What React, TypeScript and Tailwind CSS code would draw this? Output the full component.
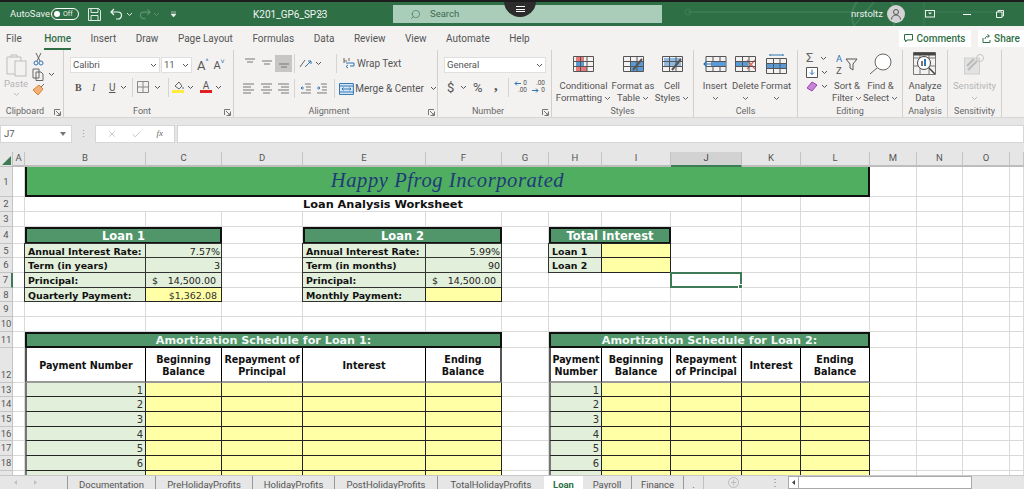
import type { ReactNode } from "react";
import { Check, Search, X } from "lucide-react";

// Excel window: title bar, ribbon, formula bar, sheet grid, sheet tabs

function Chev({ color = "#555", className = "" }: { color?: string; className?: string }) {
  return (
    <svg width="7" height="5" viewBox="0 0 7 5" className={`shrink-0 ${className}`}>
      <path d="M1 1l2.5 2.5L6 1" fill="none" stroke={color} strokeWidth="1" />
    </svg>
  );
}

function Sep({ className = "" }: { className?: string }) {
  return <div className={`w-px h-[19px] bg-[#d4d4d4] shrink-0 ${className}`} />;
}

function Launcher() {
  return (
    <svg width="7" height="7" viewBox="0 0 7 7" className="shrink-0">
      <path d="M.5 6V.5H6M6.5 2.5v4h-4M2 2l4 4M4 6h2V4" fill="none" stroke="#777" strokeWidth="1" />
    </svg>
  );
}

function TitleBar() {
  return (
    <div className="relative h-[26px] border-t-2 border-[#1c1c1c] bg-[#2f6f46] flex items-center text-[9.5px] text-[#e8f1ec] overflow-hidden">
      <svg width="340" height="24" viewBox="0 0 340 24" className="absolute left-[684px] top-0">
        <path d="M4 10H150M190 0l-20 24M150 10h20" fill="none" stroke="#3f7f58" strokeWidth="1.5" />
        <circle cx="4" cy="10" r="3" fill="none" stroke="#3f7f58" />
        <circle cx="190" cy="14" r="22" fill="none" stroke="#3f7f58" strokeWidth="2" />
        <path d="M250 10h70M240 0v24" fill="none" stroke="#3f7f58" />
      </svg>
      <span className="ml-[10px] w-[37px]">AutoSave</span>
      <div className="ml-[4px] w-[28px] h-[12px] rounded-full border border-white flex items-center pl-[2px] gap-[3px]">
        <span className="w-[6px] h-[6px] rounded-full bg-white" />
        <span className="text-[7px] leading-none">Off</span>
      </div>
      <svg width="13" height="13" viewBox="0 0 13 13" className="ml-[9px]">
        <path d="M.5.5h10l2 2v10H.5zM3 .5v4h7v-4M3 12.5V7.5h7v5" fill="none" stroke="#dfe9e3" />
      </svg>
      <svg width="13" height="12" viewBox="0 0 13 12" className="ml-[9px]">
        <path d="M1 4h7a3.5 3.5 0 0 1 0 7H6M4 1L1 4l3 3" fill="none" stroke="#eef4f0" strokeWidth="1.2" />
      </svg>
      <Chev color="#dfe9e3" className="ml-[3px]" />
      <svg width="12" height="12" viewBox="0 0 13 12" className="ml-[6px]">
        <path d="M12 4H5a3.5 3.5 0 0 0 0 7h2M9 1l3 3-3 3" fill="none" stroke="#5f9477" strokeWidth="1.2" />
      </svg>
      <Chev color="#5f9477" className="ml-[2px]" />
      <svg width="7" height="7" viewBox="0 0 7 7" className="ml-[10px]">
        <path d="M1 1h5M1 3l2.5 3L6 3z" fill="#eef4f0" stroke="#eef4f0" strokeWidth=".6" />
      </svg>
      <span className="ml-[76px] w-[60px] text-[10px] whitespace-nowrap text-[#f0f5f2]">K201_GP6_SP23</span>
      <Chev color="#eef4f0" className="ml-[4px]" />
      <div className="ml-[69px] w-[269px] h-[18px] bg-[#a9cdb8] flex items-center pl-[17px] text-[#3f6a52]">
        <Search size={11} className="-scale-x-100" strokeWidth={1.3} />
        <span className="ml-[9px]">Search</span>
      </div>
      <span className="relative ml-[189px] w-[30px] whitespace-nowrap">nrstoltz</span>
      <div className="relative ml-[6px] w-[18px] h-[18px] rounded-full bg-[#d3d3d3] flex items-center justify-center">
        <svg width="12" height="12" viewBox="0 0 12 12">
          <circle cx="6" cy="4" r="2.5" fill="none" stroke="#555" />
          <path d="M1.5 11.5a4.5 4.5 0 0 1 9 0" fill="none" stroke="#555" />
        </svg>
      </div>
      <svg width="10" height="8" viewBox="0 0 10 8" className="relative ml-[20px]">
        <rect x=".5" y=".5" width="9" height="6.5" fill="none" stroke="#eef4f0" />
        <path d="M3 2.5L5 4.5 7 2.5z" fill="#eef4f0" />
      </svg>
      <div className="relative ml-[28px] w-[8px] h-px bg-white" />
      <svg width="8" height="8" viewBox="0 0 8 8" className="relative ml-[25px]">
        <path d="M.5 2h5.5v5.5H.5zM2 2V.5h5.5V6H6" fill="none" stroke="#eef4f0" />
      </svg>
      <div className="absolute left-[504px] -top-[17px] w-[32px] h-[32px] rounded-full bg-[#2c2c2c] flex flex-col items-center justify-end gap-[1.5px] pb-[5px]">
        <span className="w-[9px] h-px bg-white" />
        <span className="w-[9px] h-px bg-white" />
        <span className="w-[9px] h-px bg-white" />
      </div>
    </div>
  );
}

const tabs = ["File", "Home", "Insert", "Draw", "Page Layout", "Formulas", "Data", "Review", "View", "Automate", "Help"];

function TabRow() {
  return (
    <div className="h-[24px] bg-[#f3f2f1] flex items-center pl-[6px] gap-[19.5px] text-[10px] text-[#555]">
      {tabs.map((t) => (
        <span
          key={t}
          className={
            t === "Home"
              ? "relative text-[#2f6f46] font-medium ml-[3px] after:absolute after:left-0 after:right-0 after:-bottom-[4px] after:h-[2px] after:bg-[#2f6f46]"
              : ""
          }
        >
          {t}
        </span>
      ))}
      <div className="ml-auto flex items-center gap-[7px] text-[10px] text-[#2f6f46] font-medium">
        <div className="w-[72px] h-[17px] bg-white flex items-center justify-center gap-[3px]">
          <svg width="9" height="9" viewBox="0 0 9 9">
            <path d="M.5.5h8v5.5H3L1.5 8V6h-1z" fill="none" stroke="#2f6f46" />
          </svg>
          Comments
        </div>
        <div className="w-[46px] h-[17px] bg-white flex items-center justify-center gap-[3px]">
          <svg width="9" height="9" viewBox="0 0 9 9">
            <path d="M1 4v4.5h7V6M3 5c0-2 2-3 4-3M5.5.5L7.5 2 5.5 3.5" fill="none" stroke="#2f6f46" />
          </svg>
          Share
        </div>
      </div>
    </div>
  );
}

function Group({ w, label, launcher, children }: { w: string; label: string; launcher?: boolean; children: ReactNode }) {
  return (
    <div className={`${w} shrink-0 h-[67px] flex flex-col border-r border-[#d2d0ce]`}>
      <div className="flex-1 min-h-0 flex">{children}</div>
      <div className={`h-[10px] flex items-center justify-center relative text-[9px] text-[#666] ${launcher ? "pr-[13px]" : ""}`}>
        {label}
        {launcher && (
          <span className="absolute right-[2px] top-[2px] flex">
            <Launcher />
          </span>
        )}
      </div>
    </div>
  );
}

function Big({ w, icon, lines, chev = true, gray }: { w: string; icon: ReactNode; lines: string[]; chev?: boolean; gray?: boolean }) {
  return (
    <div className={`${w} shrink-0 flex flex-col items-center pt-[1px] text-[9.5px] leading-[12px] ${gray ? "text-[#b5b5b5]" : "text-[#555]"}`}>
      <div className="h-[25px] flex items-center justify-center mb-[4px]">{icon}</div>
      {lines.map((l, i) => (
        <div key={i} className="flex items-center gap-[2px] whitespace-nowrap">
          {l}
          {chev && i === lines.length - 1 && lines.length === 2 && <Chev color={gray ? "#bbb" : "#666"} />}
        </div>
      ))}
      {chev && lines.length === 1 && (
        <div className="h-[12px] flex items-center">
          <Chev color={gray ? "#bbb" : "#666"} />
        </div>
      )}
    </div>
  );
}

function CellGrid({ children, w = 21, h = 16 }: { children?: ReactNode; w?: number; h?: number }) {
  return (
    <svg width={w} height={h} viewBox="0 0 21 16">
      {children}
      <path d="M.5.5h20v15H.5zM.5 5.5h20M.5 10.5h20M7.5.5v15M14 .5v15" fill="none" stroke="#555" />
    </svg>
  );
}

function AlignLines({ kind }: { kind: "top" | "mid" | "bot" | "left" | "center" | "right" }) {
  const rows: Record<string, string> = {
    top: "M2 2h10M4 5h6",
    mid: "M2 4h10M4 7h6",
    bot: "M2 7h10M4 10h6",
    left: "M1 2h11M1 5h8M1 8h11M1 11h8",
    center: "M1 2h11M3 5h7M1 8h11M3 11h7",
    right: "M1 2h11M4 5h8M1 8h11M4 11h8",
  };
  return (
    <svg width="13" height="13" viewBox="0 0 13 13">
      <path d={rows[kind]} fill="none" stroke="#777" />
    </svg>
  );
}

function ClipboardGroup() {
  return (
    <Group w="w-[64px]" label="Clipboard" launcher>
      <div className="w-[32px] flex flex-col items-center text-[9.5px] leading-[12px] text-[#b5b5b5] pt-[4px]">
        <svg width="21" height="23" viewBox="0 0 21 23">
          <path d="M3 3h12v17H1V3zM5 3V1h6v2" fill="none" stroke="#bdbdbd" />
          <rect x="9" y="7" width="11" height="15" fill="#f3f2f1" stroke="#bdbdbd" />
        </svg>
        <span className="mt-[1px]">Paste</span>
        <Chev color="#bbb" className="mt-[2px]" />
      </div>
      <div className="flex flex-col pt-[2px] gap-[2px]">
        <svg width="11" height="14" viewBox="0 0 11 14" className="ml-[1px]">
          <path d="M3 1l4 8M8 1L4 9" stroke="#666" fill="none" />
          <circle cx="3" cy="11" r="2" fill="none" stroke="#2e75b6" />
          <circle cx="8" cy="11" r="2" fill="none" stroke="#2e75b6" />
        </svg>
        <div className="flex items-center gap-[3px]">
          <svg width="13" height="13" viewBox="0 0 13 13">
            <path d="M1 1h6v9H1zM4 4h5l2 2v6.5H4z" fill="#f3f2f1" stroke="#666" />
          </svg>
          <Chev />
        </div>
        <svg width="13" height="13" viewBox="0 0 13 13">
          <path d="M1 7l6-5 4 4-5 6z" fill="#f2b179" stroke="#d68432" />
          <path d="M9 4l3-3" stroke="#666" />
        </svg>
      </div>
    </Group>
  );
}

function FontGroup() {
  return (
    <Group w="w-[170px]" label="Font" launcher>
      <div className="flex flex-col pl-[6px] pt-[7px] w-full">
        <div className="flex items-center h-[16px]">
          <div className="w-[90px] h-[16px] bg-white border border-[#e1dfdd] flex items-center justify-between px-[2px] text-[9.5px] text-[#555]">
            Calibri <Chev />
          </div>
          <div className="w-[31px] h-[16px] ml-[1px] bg-white border border-[#e1dfdd] flex items-center justify-between px-[2px] text-[9.5px] text-[#555]">
            11 <Chev />
          </div>
          <span className="ml-[5px] text-[13px] leading-none text-[#555]">A</span>
          <span className="text-[7px] text-[#2e75b6] -mt-[6px]">^</span>
          <span className="ml-[5px] text-[11px] leading-none text-[#555]">A</span>
          <span className="text-[7px] text-[#2e75b6] -mt-[6px]">˅</span>
        </div>
        <div className="flex items-center h-[16px] mt-[6px] text-[10px] text-[#555]">
          <span className="ml-[5px] w-[17px] font-bold font-['Liberation_Serif',serif]">B</span>
          <span className="w-[17px] italic font-['Liberation_Serif',serif]">I</span>
          <span className="w-[10px] underline">U</span>
          <Chev className="ml-[1px]" />
          <Sep className="ml-[5px]" />
          <svg width="12" height="12" viewBox="0 0 12 12" className="ml-[4px]">
            <path d="M.5.5h11v11H.5zM6 .5v11M.5 6h11" fill="none" stroke="#888" />
          </svg>
          <Chev className="ml-[5px]" />
          <Sep className="ml-[7px]" />
          <div className="ml-[3px] w-[12px] flex flex-col items-center">
            <svg width="11" height="9" viewBox="0 0 11 9">
              <path d="M2 5l4-4 3 4-3 3z" fill="none" stroke="#666" />
              <path d="M10 6v2" stroke="#2e75b6" />
            </svg>
            <div className="w-[12px] h-[3px] bg-[#ffeb3b]" />
          </div>
          <Chev className="ml-[3px]" />
          <div className="ml-[6px] w-[12px] flex flex-col items-center text-[10px] leading-[9px]">
            A
            <div className="w-[12px] h-[3px] bg-[#e02020]" />
          </div>
          <Chev className="ml-[3px]" />
        </div>
      </div>
    </Group>
  );
}

function AlignmentGroup() {
  return (
    <Group w="w-[204px]" label="Alignment" launcher>
      <div className="flex flex-col pl-[6px] pt-[5px] w-full text-[10px] text-[#555] whitespace-nowrap">
        <div className="flex items-center h-[17px]">
          <div className="w-[18px] flex justify-center"><AlignLines kind="top" /></div>
          <div className="w-[17px] flex justify-center"><AlignLines kind="mid" /></div>
          <div className="w-[17px] h-[17px] bg-[#c8c6c4] flex items-center justify-center"><AlignLines kind="bot" /></div>
          <Sep className="ml-[2px]" />
          <svg width="14" height="12" viewBox="0 0 14 12" className="ml-[4px]">
            <path d="M1 9l5-7M6 9l3-3" stroke="#666" fill="none" />
            <path d="M7 8l5-5M9 3h3v3" stroke="#2e75b6" fill="none" />
          </svg>
          <Chev className="ml-[2px]" />
          <Sep className="ml-[14px]" />
          <svg width="13" height="13" viewBox="0 0 13 13" className="ml-[6px]">
            <path d="M7 9h4V6H3M5 11L3 9.5 5 8" fill="none" stroke="#2e75b6" />
            <path d="M1 1v5M1 4h3M6 1v3" fill="none" stroke="#666" />
          </svg>
          <span className="ml-[1px]">Wrap Text</span>
        </div>
        <div className="flex items-center h-[17px] mt-[8px]">
          <div className="w-[18px] flex justify-center"><AlignLines kind="left" /></div>
          <div className="w-[17px] flex justify-center"><AlignLines kind="center" /></div>
          <div className="w-[17px] flex justify-center"><AlignLines kind="right" /></div>
          <Sep className="ml-[2px]" />
          <svg width="12" height="11" viewBox="0 0 12 11" className="ml-[5px]">
            <path d="M5 1h6M6 4h5M6 7h5M1 10h10" stroke="#777" fill="none" />
            <path d="M4 5H1M2.5 3.5L1 5l1.500 1.500" stroke="#2e75b6" fill="none" />
          </svg>
          <svg width="12" height="11" viewBox="0 0 12 11" className="ml-[5px]">
            <path d="M5 1h6M6 4h5M6 7h5M1 10h10" stroke="#777" fill="none" />
            <path d="M1 5h3M2.500 3.500L4 5 2.500 6.500" stroke="#2e75b6" fill="none" />
          </svg>
          <Sep className="ml-[6px]" />
          <svg width="15" height="12" viewBox="0 0 15 12" className="ml-[4px]">
            <path d="M.5.5h14v11H.5z" fill="#dbe9f6" stroke="#2e75b6" />
            <path d="M3 6h9M4.500 4.500L3 6l1.500 1.500M10.500 4.500L12 6l-1.500 1.500M.5 3h14M.5 9h14" fill="none" stroke="#2e75b6" />
          </svg>
          <span className="ml-[1px]">Merge &amp; Center</span>
          <Chev className="ml-[6px]" />
        </div>
      </div>
    </Group>
  );
}

function DecimalIcon({ more }: { more?: boolean }) {
  return (
    <div className="w-[13px] h-[14px] relative text-[6.5px] leading-[7px] text-[#555] text-right">
      <div>{more ? ".00" : "0"}</div>
      <div>{more ? "0" : ".00"}</div>
      <svg width="7" height="5" viewBox="0 0 7 5" className={`absolute left-0 ${more ? "bottom-[1px]" : "top-[1px]"}`}>
        {more ? (
          <path d="M0 2.500h6M4 .5l2 2-2 2" fill="none" stroke="#2e75b6" />
        ) : (
          <path d="M7 2.500H1M3 .5l-2 2 2 2" fill="none" stroke="#2e75b6" />
        )}
      </svg>
    </div>
  );
}

function NumberGroup() {
  return (
    <Group w="w-[114px]" label="Number" launcher>
      <div className="flex flex-col pl-[6px] pt-[7px] w-full text-[#555]">
        <div className="w-[102px] h-[16px] bg-white border border-[#e1dfdd] flex items-center justify-between px-[2px] text-[9.5px]">
          General <Chev />
        </div>
        <div className="flex items-center h-[16px] mt-[6px]">
          <span className="ml-[3px] w-[10px] text-[13px] leading-none">$</span>
          <Chev className="ml-[3px]" />
          <span className="ml-[6px] w-[15px] text-[13px] leading-none">%</span>
          <span className="ml-[6px] w-[6px] text-[15px] font-bold leading-none -mt-[4px] font-['Liberation_Serif',serif]">,</span>
          <Sep className="ml-[8px]" />
          <div className="ml-[5px]"><DecimalIcon /></div>
          <div className="ml-[5px]"><DecimalIcon more /></div>
        </div>
      </div>
    </Group>
  );
}

function StylesGroup() {
  return (
    <Group w="w-[142px]" label="Styles">
      <div className="flex w-full pl-[2px]">
        <Big
          w="w-[59px]"
          lines={["Conditional", "Formatting"]}
          icon={
            <CellGrid>
              <rect x="3" y="1" width="8" height="4" fill="#e8777a" />
              <rect x="3" y="6" width="8" height="4" fill="#5b9bd5" />
              <rect x="3" y="11" width="11" height="4" fill="#e8777a" />
            </CellGrid>
          }
        />
        <Big
          w="w-[40px]"
          lines={["Format as", "Table"]}
          icon={
            <CellGrid>
              <rect x="8" y="6" width="12" height="9" fill="#5b9bd5" />
              <path d="M10 14l9-11" stroke="#555" strokeWidth="2" />
            </CellGrid>
          }
        />
        <Big
          w="w-[38px]"
          lines={["Cell", "Styles"]}
          icon={
            <CellGrid>
              <rect x="2" y="2" width="17" height="9" fill="#8db9e2" />
              <path d="M10 14l9-11" stroke="#555" strokeWidth="2" />
            </CellGrid>
          }
        />
      </div>
    </Group>
  );
}

function CellsGroup() {
  return (
    <Group w="w-[104px]" label="Cells">
      <div className="flex w-full pl-[6px]">
        <Big
          w="w-[30px]"
          lines={["Insert"]}
          icon={
            <svg width="24" height="16" viewBox="0 0 24 16">
              <path d="M3 .5h20v15H3z M3 5.500h20M3 10.500h20M10 .5v15M17 .5v15" fill="none" stroke="#555" />
              <rect x="8" y="6" width="15" height="4" fill="#5b9bd5" />
              <path d="M9 8H1M4 5L1 8l3 3" fill="none" stroke="#2e75b6" strokeWidth="1.2" />
            </svg>
          }
        />
        <Big
          w="w-[31px]"
          lines={["Delete"]}
          icon={
            <CellGrid>
              <rect x="1" y="6" width="12" height="4" fill="#5b9bd5" />
              <path d="M12 4l8 9M20 4l-8 9" stroke="#e26a6a" strokeWidth="1.2" />
            </CellGrid>
          }
        />
        <Big
          w="w-[30px]"
          lines={["Format"]}
          icon={
            <svg width="21" height="20" viewBox="0 0 21 20">
              <path d="M4 1h13M4 0v2M17 0v2" stroke="#2e75b6" fill="none" />
              <g transform="translate(0 4)">
                <rect x="1" y="5" width="19" height="5" fill="#5b9bd5" />
                <path d="M.5.5h20v15H.5zM.5 5.500h20M.5 10.500h20M7.500.5v15M14 .5v15" fill="none" stroke="#555" />
              </g>
            </svg>
          }
        />
      </div>
    </Group>
  );
}

function EditingGroup() {
  return (
    <Group w="w-[105px]" label="Editing">
      <div className="flex w-full">
        <div className="w-[32px] pl-[8px] flex flex-col items-start gap-[2px] pt-[1px]">
          <div className="flex items-center gap-[3px]">
            <span className="w-[11px] text-[13px] leading-[14px] text-[#666]">Σ</span>
            <Chev />
          </div>
          <div className="flex items-center gap-[3px]">
            <svg width="12" height="11" viewBox="0 0 12 11">
              <path d="M.5.5h11v10H.5z" fill="white" stroke="#555" />
              <path d="M6 2.500v5M4 5.500L6 7.500l2-2" fill="none" stroke="#2e75b6" />
            </svg>
            <Chev />
          </div>
          <div className="flex items-center gap-[3px] mt-[1px]">
            <svg width="12" height="11" viewBox="0 0 12 11">
              <path d="M1 7l5-6 5 3-5 6z" fill="#c586d6" stroke="#9b3fb5" />
            </svg>
            <Chev />
          </div>
        </div>
        <Big
          w="w-[34px]"
          lines={["Sort &", "Filter"]}
          icon={
            <svg width="22" height="22" viewBox="0 0 22 22">
              <text x="0" y="9" fontSize="9.5" fill="#2e75b6" fontFamily="Roboto">A</text>
              <text x="0" y="21" fontSize="9.5" fill="#555" fontFamily="Roboto">Z</text>
              <path d="M10 6h11l-4 5v6l-3-2v-4z" fill="none" stroke="#555" />
            </svg>
          }
        />
        <Big
          w="w-[33px]"
          lines={["Find &", "Select"]}
          icon={
            <svg width="23" height="22" viewBox="0 0 23 22">
              <circle cx="14" cy="9" r="8" fill="white" stroke="#666" />
              <path d="M8 15l-7 6" stroke="#666" />
            </svg>
          }
        />
      </div>
    </Group>
  );
}

function RightGroups() {
  return (
    <>
      <Group w="w-[45px]" label="Analysis">
        <Big
          w="w-full"
          chev={false}
          lines={["Analyze", "Data"]}
          icon={
            <svg width="24" height="24" viewBox="0 0 24 24">
              <path d="M.5.5h22v22H.5zM.5 6h22M.5 14h22M7 .5v22M16 .5v22" fill="none" stroke="#777" />
              <path d="M.5.5h22v3H.5z" fill="#444" />
              <circle cx="11" cy="11" r="6.500" fill="white" stroke="#444" />
              <rect x="8" y="9" width="2" height="5" fill="#777" />
              <rect x="11" y="7" width="2" height="7" fill="#2e75b6" />
              <path d="M16 16l6 6" stroke="#444" strokeWidth="1.500" />
            </svg>
          }
        />
      </Group>
      <Group w="w-[54px]" label="Sensitivity">
        <Big
          w="w-full"
          gray
          lines={["Sensitivity"]}
          icon={
            <svg width="21" height="22" viewBox="0 0 21 22">
              <rect x=".5" y="5" width="15" height="16" fill="#e2e2e2" stroke="#cfcfcf" />
              <path d="M4 17l9-9M3 13l7-7" stroke="#bbb" strokeWidth="2" />
              <circle cx="16" cy="5" r="3.500" fill="none" stroke="#c5c5c5" />
            </svg>
          }
        />
      </Group>
    </>
  );
}

function Ribbon() {
  return (
    <div className="h-[68px] bg-[#f3f2f1] flex border-b border-[#d6d6d6]">
      <ClipboardGroup />
      <FontGroup />
      <AlignmentGroup />
      <NumberGroup />
      <StylesGroup />
      <CellsGroup />
      <EditingGroup />
      <RightGroups />
    </div>
  );
}

function FormulaBar() {
  return (
    <div className="h-[34px] bg-[#e6e6e6] flex items-start pt-[7px]">
      <div className="w-[72px] h-[18px] bg-white border border-[#d6d6d6] flex items-center justify-between pl-[3px] pr-[5px] text-[9.5px] text-[#555]">
        J7
        <svg width="6" height="4" viewBox="0 0 6 4"><path d="M0 0h6L3 4z" fill="#777" /></svg>
      </div>
      <div className="w-[23px] h-[18px] flex items-center justify-center text-[#999] text-[9px] leading-[4px]">⋮</div>
      <div className="w-[80px] h-[18px] bg-white border border-[#d6d6d6] flex items-center justify-around px-[4px] text-[#c0c0c0]">
        <X size={10} />
        <Check size={11} />
        <span className="text-[9px] italic text-[#666] font-['Liberation_Serif',serif]">fx</span>
      </div>
      <div className="ml-[2px] flex-1 h-[18px] bg-white border border-[#d6d6d6]" />
    </div>
  );
}

const colNames = ["A", "B", "C", "D", "E", "F", "G", "H", "I", "J", "K", "L", "M", "N", "O", ""];

type CellDef = { span?: number; cls?: string; text?: ReactNode; selected?: boolean };

const LINE = "border-r border-b border-[#d9d9d9]";
const HEAD = "border-2 border-[#111] bg-[#50966a] text-white text-center text-[11.5px] leading-[14px] font-bold";
const AMORT = "border-2 border-[#111] bg-[#50966a] text-[#f2f7f4] text-center text-[11.2px] leading-[14px] font-bold";
const LABEL = "border border-[#333] -ml-px -mt-px bg-[#e2efda] pl-[3px] font-bold text-[9.4px] leading-[15px] text-[#111] whitespace-nowrap";
const VALUE = "border border-[#333] -mt-px -ml-px bg-[#e2efda] px-[1px] text-right text-[9.5px] leading-[15px] text-[#222]";
const YELLOW = "border border-[#222] -mt-px -ml-px bg-[#ffffa6] px-[4px] text-right text-[9.5px] leading-[15px] text-[#333]";
const TH = "border-r border-black border-b-2 border-b-[#999] bg-white flex items-center justify-center text-center pt-[3px] text-[9.6px] leading-[12.5px] font-bold text-[#111]";
const NUM = "border-r border-b border-[#222] border-l-2 border-l-[#777] bg-[#e2efda] text-right pr-[2px] text-[10px] leading-[15px] text-[#333]";
const PAY = "border-r border-b border-[#222] bg-[#ffffa6]";

function blanks(n: number): CellDef[] {
  return Array.from({ length: n }, () => ({}));
}

function money(v: string) {
  return (
    <span className="flex justify-between pl-[5px] pr-[4px]">
      <span>$</span>
      <span>{v}</span>
    </span>
  );
}

function amortRow(n?: number): CellDef[] {
  const yellow: CellDef[] = [{ cls: PAY }, { cls: PAY }, { cls: PAY }, { cls: PAY }];
  return [
    {},
    { cls: NUM, text: n },
    ...yellow,
    {},
    { cls: NUM, text: n },
    ...yellow,
    ...blanks(4),
  ];
}

const rows: { label: string; cells: CellDef[]; align?: string }[] = [
  {
    label: "1",
    align: "items-center",
    cells: [
      {},
      {
        span: 11,
        cls: "border-l-2 border-r-2 border-b-2 border-[#111] bg-[#4fae60] text-center text-[20.5px] leading-[27px] text-[#1f3a78] italic tracking-[0.6px] font-['Liberation_Serif',serif]",
        text: "Happy Pfrog Incorporated",
      },
      ...blanks(4),
    ],
  },
  {
    label: "2",
    cells: [
      {},
      { span: 9, cls: `${LINE} text-center text-[11.3px] leading-[16px] font-bold text-[#111]`, text: "Loan Analysis Worksheet" },
      ...blanks(6),
    ],
  },
  { label: "3", cells: blanks(16) },
  {
    label: "4",
    cells: [{}, { span: 2, cls: HEAD, text: "Loan 1" }, {}, { span: 2, cls: HEAD, text: "Loan 2" }, {}, { span: 2, cls: HEAD, text: "Total Interest" }, ...blanks(7)],
  },
  {
    label: "5",
    cells: [
      {},
      { cls: LABEL, text: "Annual Interest Rate:" },
      { cls: VALUE, text: "7.57%" },
      {},
      { cls: LABEL, text: "Annual Interest Rate:" },
      { cls: VALUE, text: "5.99%" },
      {},
      { cls: LABEL, text: "Loan 1" },
      { cls: YELLOW },
      ...blanks(7),
    ],
  },
  {
    label: "6",
    cells: [
      {},
      { cls: LABEL, text: "Term (in years)" },
      { cls: VALUE, text: "3" },
      {},
      { cls: LABEL, text: "Term (in months)" },
      { cls: VALUE, text: "90" },
      {},
      { cls: LABEL, text: "Loan 2" },
      { cls: YELLOW },
      ...blanks(7),
    ],
  },
  {
    label: "7",
    cells: [
      {},
      { cls: LABEL, text: "Principal:" },
      { cls: VALUE, text: money("14,500.00") },
      {},
      { cls: LABEL, text: "Principal:" },
      { cls: VALUE, text: money("14,500.00") },
      ...blanks(3),
      { selected: true },
      ...blanks(6),
    ],
  },
  {
    label: "8",
    cells: [
      {},
      { cls: LABEL, text: "Quarterly Payment:" },
      { cls: YELLOW, text: "$1,362.08" },
      {},
      { cls: LABEL, text: "Monthly Payment:" },
      { cls: YELLOW },
      ...blanks(10),
    ],
  },
  { label: "9", cells: blanks(16) },
  { label: "10", cells: blanks(16) },
  {
    label: "11",
    cells: [
      {},
      { span: 5, cls: AMORT, text: "Amortization Schedule for Loan 1:" },
      {},
      { span: 5, cls: AMORT, text: "Amortization Schedule for Loan 2:" },
      ...blanks(4),
    ],
  },
  {
    label: "12",
    align: "items-end",
    cells: [
      {},
      { cls: `${TH} border-l-2 border-l-[#555]`, text: "Payment Number" },
      { cls: TH, text: <>Beginning<br />Balance</> },
      { cls: TH, text: <>Repayment of<br />Principal</> },
      { cls: TH, text: "Interest" },
      { cls: `${TH} border-r-2 border-r-[#555]`, text: <>Ending<br />Balance</> },
      {},
      { cls: `${TH} border-l-2 border-l-[#555]`, text: <>Payment<br />Number</> },
      { cls: TH, text: <>Beginning<br />Balance</> },
      { cls: TH, text: <>Repayment<br />of Principal</> },
      { cls: TH, text: "Interest" },
      { cls: TH, text: <>Ending<br />Balance</> },
      ...blanks(4),
    ],
  },
  ...[1, 2, 3, 4, 5, 6].map((n) => ({ label: String(n + 12), cells: amortRow(n) })),
  { label: "", cells: amortRow() },
];

function Sheet() {
  return (
    <div className="h-[323px] overflow-hidden bg-white font-['DejaVu_Sans',sans-serif]">
      <div className="grid grid-cols-[13px_12px_121px_76px_81px_123px_76px_47px_53px_69px_71px_59px_69px_47px_46px_47px_14px] grid-rows-[15px_30px_15px_15px_17px_14px_15px_15px_14px_15px_15px_16px_35px_14px_15px_15px_14px_15px_15px_15px]">
        <div className="bg-[#e6e6e6] border-r border-b border-[#bdbdbd] flex items-end justify-end pr-[1px] pb-[1px]">
          <svg width="9" height="9" viewBox="0 0 9 9"><path d="M9 0v9H0z" fill="#3d7a55" /></svg>
        </div>
        {colNames.map((c, i) => (
          <div
            key={i}
            className={
              c === "J"
                ? "bg-[#d2d2d2] border-b-2 border-[#3d7a55] border-r border-r-[#bdbdbd] flex items-center justify-center text-[9.5px] text-[#444] font-['Roboto',sans-serif]"
                : "bg-[#e6e6e6] border-r border-b-2 border-r-[#c4c4c4] border-b-[#bdbdbd] flex items-center justify-center text-[9.5px] text-[#555] font-['Roboto',sans-serif]"
            }
          >
            {c}
          </div>
        ))}
        {rows.map((r) => [
          <div
            key={`h${r.label}`}
            className={`bg-[#e6e6e6] border-r border-b border-[#c4c4c4] flex justify-center text-[9.5px] leading-[14px] text-[#555] font-['Roboto',sans-serif] overflow-hidden ${
              r.align ?? "items-center"
            } ${r.label === "7" ? "border-r-2 border-r-[#3d7a55]" : ""}`}
          >
            {r.label}
          </div>,
          ...r.cells.map((c, i) => (
            <div
              key={`${r.label}-${i}`}
              style={c.span ? { gridColumn: `span ${c.span}` } : undefined}
              className={c.selected ? `relative ${LINE}` : c.cls ?? LINE}
            >
              {c.selected && (
                <div className="absolute -left-px -top-px -right-px -bottom-px border-2 border-[#3d7a55]">
                  <span className="absolute -right-[3px] -bottom-[3px] w-[5px] h-[5px] bg-[#3d7a55] border border-white" />
                </div>
              )}
              {c.text}
            </div>
          )),
        ])}
      </div>
    </div>
  );
}

const sheetTabs = [
  { name: "Documentation", w: "w-[88px]" },
  { name: "PreHolidayProfits", w: "w-[97px]" },
  { name: "HolidayProfits", w: "w-[82px]" },
  { name: "PostHolidayProfits", w: "w-[103px]" },
  { name: "TotalHolidayProfits", w: "w-[107px]" },
];

function SheetTabs() {
  return (
    <div className="h-[14px] bg-[#e6e6e6] border-t border-[#c8c8c8] flex items-start overflow-hidden text-[9.5px] leading-[18px] text-[#555] font-['Roboto',sans-serif]">
      <div className="w-[67px] h-full flex items-center pl-[14px] gap-[17px] text-[#bbb]">
        <svg width="3" height="5" viewBox="0 0 3 5"><path d="M3 0v5L0 2.500z" fill="#c0c0c0" /></svg>
        <svg width="3" height="5" viewBox="0 0 3 5"><path d="M0 0v5l3-2.500z" fill="#c0c0c0" /></svg>
      </div>
      {sheetTabs.map((t) => (
        <div key={t.name} className={`${t.w} h-[18px] border-l border-[#999] text-center whitespace-nowrap`}>
          {t.name}
        </div>
      ))}
      <div className="w-[39px] h-[18px] bg-white text-center font-bold text-[#2f6f46]">Loan</div>
      <div className="w-[48px] h-[18px] text-center">Payroll</div>
      <div className="w-[52px] h-[18px] border-l border-[#999] text-center">Finance</div>
      <div className="w-[20px] h-[18px] border-l border-[#999] text-center">.</div>
      <div className="w-[60px] h-full border-l border-[#c0c0c0] flex items-center justify-center">
        <span className="w-[11px] h-[11px] rounded-full border border-[#bbb] flex items-center justify-center text-[10px] leading-none text-[#bbb]">+</span>
      </div>
      <div className="w-[21px] h-full text-[#888] text-right pr-[4px] leading-[13px]">⋮</div>
      <div className="ml-[4px] w-[184px] h-full bg-white border border-[#aaa] flex items-center">
        <div className="w-[10px] h-full border-r border-[#aaa] flex items-center justify-center">
          <svg width="3" height="5" viewBox="0 0 3 5"><path d="M3 0v5L0 2.500z" fill="#444" /></svg>
        </div>
      </div>
    </div>
  );
}

export default function App() {
  return (
    <div className="w-[1024px] h-[489px] overflow-hidden bg-white font-['Roboto',sans-serif]">
      <TitleBar />
      <TabRow />
      <Ribbon />
      <FormulaBar />
      <Sheet />
      <SheetTabs />
    </div>
  );
}
